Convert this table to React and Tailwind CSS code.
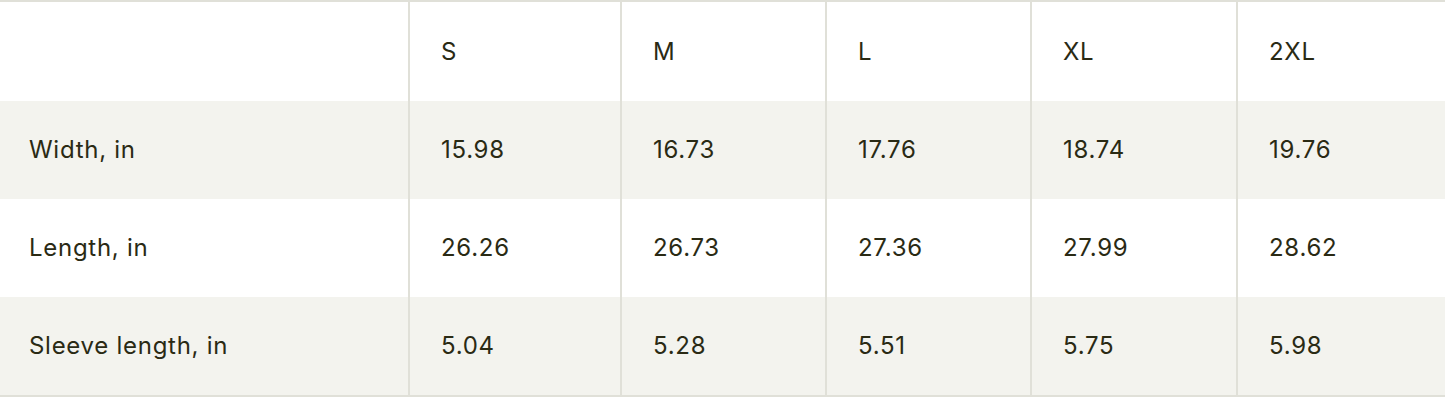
const sizes = ["S", "M", "L", "XL", "2XL"];

const rows = [
  { label: "Width, in", values: ["15.98", "16.73", "17.76", "18.74", "19.76"] },
  { label: "Length, in", values: ["26.26", "26.73", "27.36", "27.99", "28.62"] },
  { label: "Sleeve length, in", values: ["5.04", "5.28", "5.51", "5.75", "5.98"] },
];

const colWidths = ["w-[409px]", "w-[212px]", "w-[205px]", "w-[205px]", "w-[206px]", "w-[208px]"];

export default function App() {
  return (
    <div className="w-[1445px] bg-white font-['Inter',sans-serif] text-[24px] tracking-[0.03em] text-[#2a2a14]">
      <table className="w-full table-fixed border-collapse border-t-2 border-b-2 border-[#e0e0d8]">
        <colgroup>
          {colWidths.map((w, i) => (
            <col key={i} className={w} />
          ))}
        </colgroup>
        <thead>
          <tr className="h-[100px] bg-white">
            <th className="border-r-2 border-[#e0e0d8]" />
            {sizes.map((s, i) => (
              <th
                key={s}
                className={`pl-[31px] text-left font-normal ${
                  i < sizes.length - 1 ? "border-r-2 border-[#e0e0d8]" : ""
                }`}
              >
                {s}
              </th>
            ))}
          </tr>
        </thead>
        <tbody>
          {rows.map((row, r) => (
            <tr
              key={row.label}
              className={`${r === rows.length - 1 ? "h-[99px]" : "h-[98px]"} ${
                r % 2 === 0 ? "bg-[#f3f3ee]" : "bg-white"
              }`}
            >
              <td className="pl-[29px] border-r-2 border-[#e0e0d8]">{row.label}</td>
              {row.values.map((v, i) => (
                <td
                  key={i}
                  className={`pl-[31px] ${i < row.values.length - 1 ? "border-r-2 border-[#e0e0d8]" : ""}`}
                >
                  {v}
                </td>
              ))}
            </tr>
          ))}
        </tbody>
      </table>
    </div>
  );
}
